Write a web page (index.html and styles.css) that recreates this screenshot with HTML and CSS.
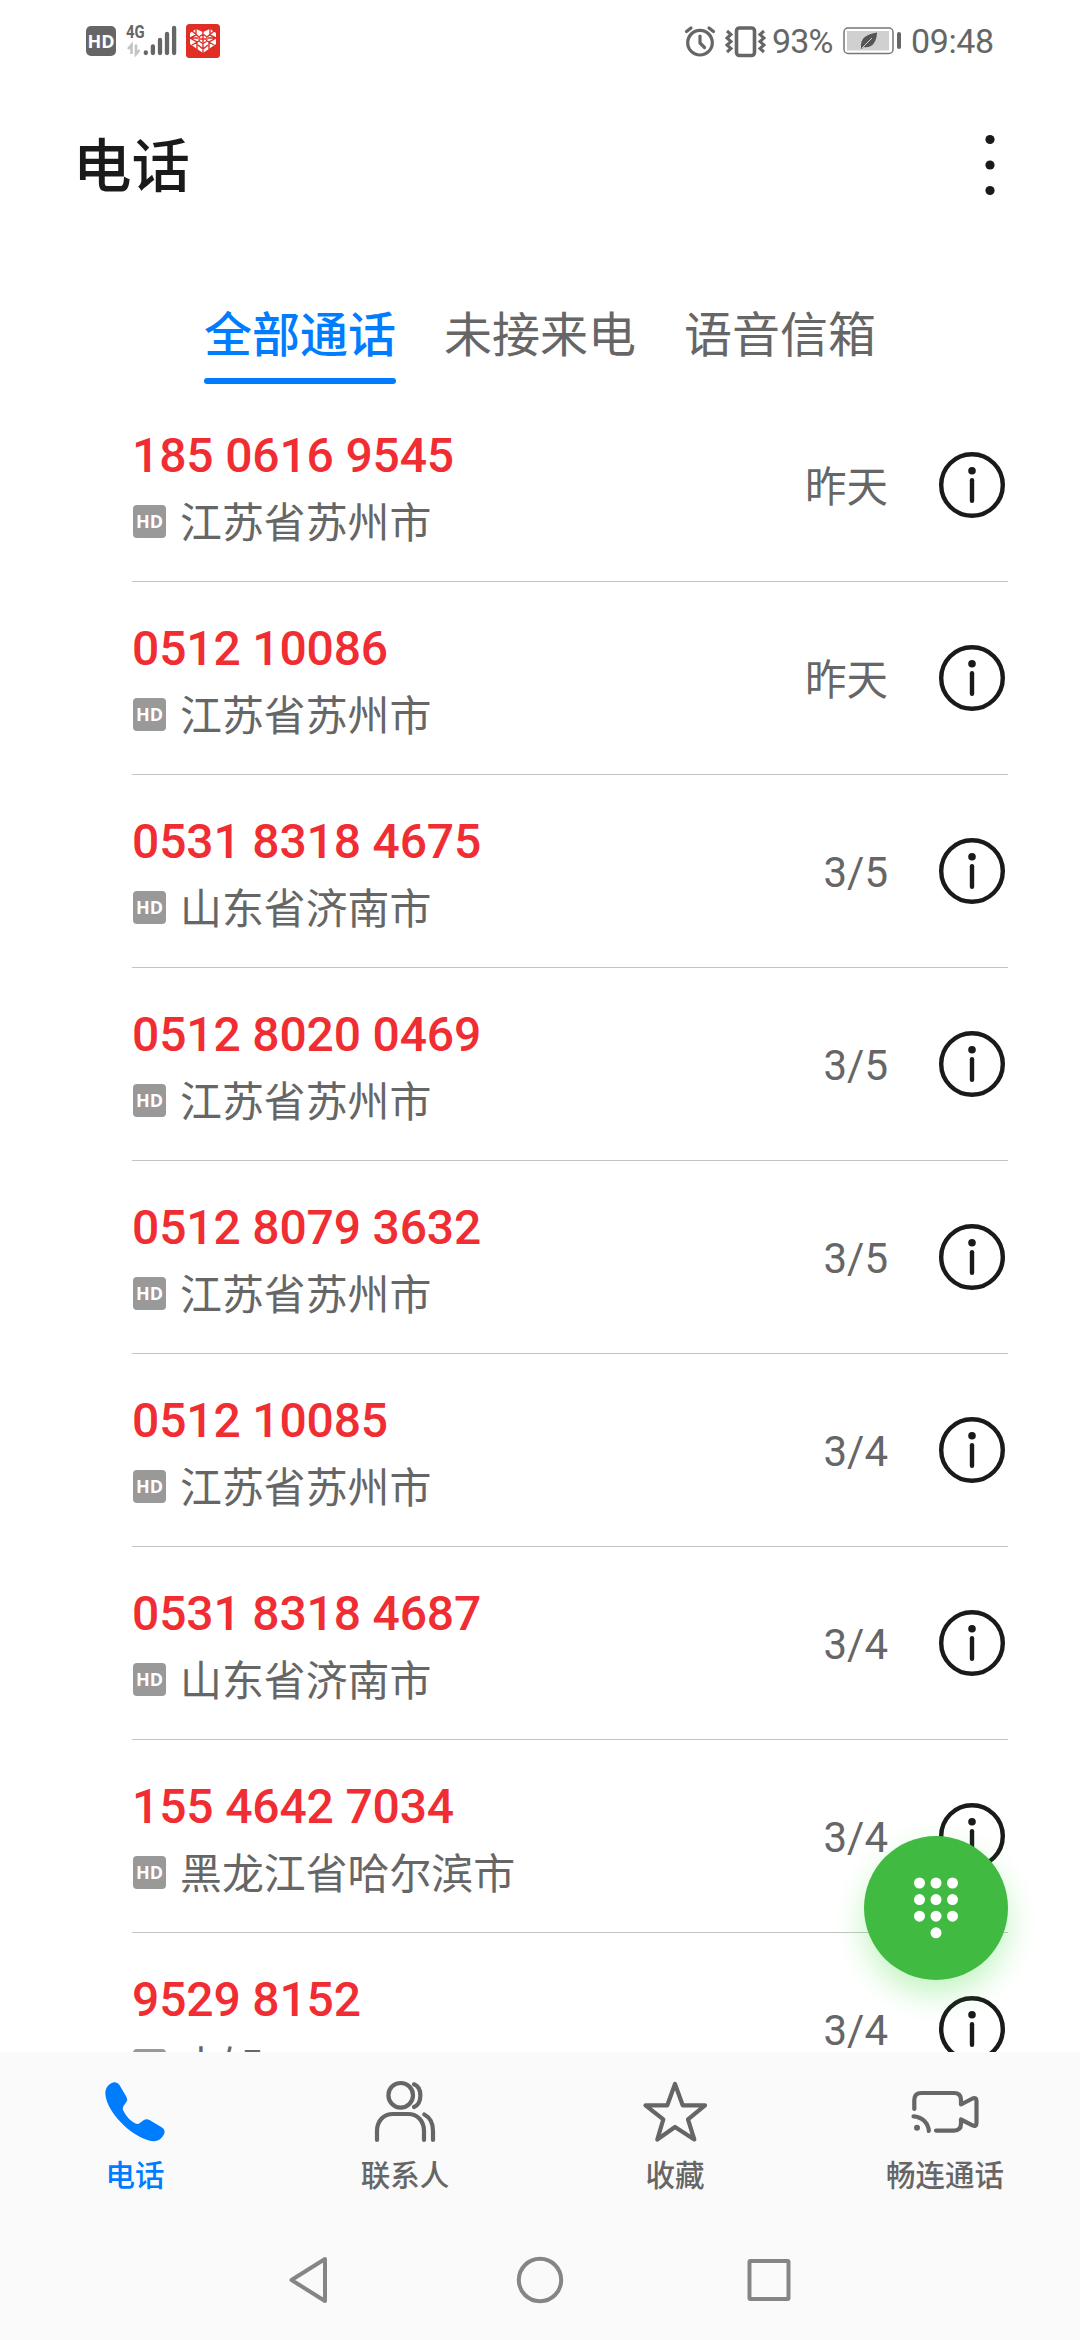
FILE: index.html
```html
<!DOCTYPE html>
<html lang="zh-CN">
<head>
  <meta charset="UTF-8">
  <title>电话</title>
  <meta name="viewport" content="width=device-width, initial-scale=1.0">
  <link rel="stylesheet" href="styles.css">
</head>
<body>
  <div class="pantalla">
    <div class="status">
      <div class="status-left">
        <span class="hd-big">HD</span>
        <div class="signal">
          <span class="net">4G</span>
          <svg width="34" height="32" viewBox="0 0 34 32">
            <path d="M2 24L5.500 20V29M10 19.500V29L13.500 25" fill="none" stroke="#c4c4c4" stroke-width="2.600"/>
            <g stroke="#666" stroke-width="4.300" stroke-linecap="round">
              <path d="M19.800 27.300v.8M26.900 21.300v6.800M34 15v13M41 9v19M48.100 3v25"/>
            </g>
          </svg>
        </div>
        <svg class="app-icon" width="34" height="34" viewBox="0 0 34 34">
          <rect width="34" height="34" rx="3.500" fill="#e02e24"/>
          <path d="M17 29L4 20V9l6-4 7 3 7-3 6 4v11z" fill="#fff"/>
          <g fill="none" stroke="#e02e24" stroke-width="1.400">
            <path d="M17 7v5M17 19v10M4 14h8M22 14h8M6 7l7 6M28 7l-7 6M6 21l7-4M28 21l-7-4M10 5v6l-6 3 7 4v7M24 5v6l6 3-7 4v7M12 21l5 4 5-4"/>
            <circle cx="17" cy="15" r="4"/>
            <path d="M14 15h6M17 12v6"/>
          </g>
        </svg>
      </div>
      <div class="status-right">
        <svg class="alarm" width="32" height="34" viewBox="0 0 32 34" fill="none" stroke="#666" stroke-width="3.200" stroke-linecap="round">
          <circle cx="16" cy="18.700" r="12.300"/>
          <path d="M16 12v7l4.500 4.500M2.500 7.500L7 4M29.500 7.500L25 4"/>
        </svg>
        <svg class="vibrate" width="42" height="34" viewBox="0 0 42 34" fill="none" stroke="#666">
          <rect x="11.500" y="4" width="18" height="27.500" rx="3" stroke-width="3.600"/>
          <path d="M2 7l4 3.500-4 3.500 4 3.500-4 3.500 4 3.500-4 3.500M39 7l-4 3.500 4 3.500-4 3.500 4 3.500-4 3.500 4 3.500" stroke-width="3"/>
        </svg>
        <span class="percent">93%</span>
        <svg class="battery" width="60" height="28" viewBox="0 0 60 28">
          <rect x="1" y="1" width="49" height="25.500" rx="4" fill="#fff" stroke="#777" stroke-width="1.500"/>
          <rect x="4" y="4" width="42" height="19.500" fill="#d0d0d0"/>
          <path d="M18 21C17 11 24 7 34 5.500C34 14 29 22 21 20L18.500 22z" fill="#555"/>
          <path d="M19 21L29 11" stroke="#d0d0d0" stroke-width="1"/>
          <path d="M56 7v13" stroke="#666" stroke-width="4" stroke-linecap="round"/>
        </svg>
        <span class="clock">09:48</span>
      </div>
    </div>

    <div class="header">
      <h1>电话</h1>
      <svg width="12" height="64" viewBox="0 0 12 64" fill="#1a1a1a">
        <circle cx="6" cy="6.500" r="4.600"/>
        <circle cx="6" cy="32" r="4.600"/>
        <circle cx="6" cy="57.500" r="4.600"/>
      </svg>
    </div>

    <div class="tabs">
      <div class="tab active">全部通话</div>
      <div class="tab">未接来电</div>
      <div class="tab">语音信箱</div>
    </div>

    <div class="lista" id="lista"></div>

    <div class="fab">
      <svg width="48" height="64" viewBox="0 0 48 64" fill="#fff">
        <circle cx="7.500" cy="7" r="5.500"/><circle cx="24" cy="7" r="5.500"/><circle cx="40.500" cy="7" r="5.500"/>
        <circle cx="7.500" cy="23.600" r="5.500"/><circle cx="24" cy="23.600" r="5.500"/><circle cx="40.500" cy="23.600" r="5.500"/>
        <circle cx="7.500" cy="40.200" r="5.500"/><circle cx="24" cy="40.200" r="5.500"/><circle cx="40.500" cy="40.200" r="5.500"/>
        <circle cx="24" cy="56.800" r="5.500"/>
      </svg>
    </div>

    <div class="menu">
      <div class="item active">
        <svg width="72" height="72" viewBox="0 0 72 72" fill="#007dff">
          <path d="M6.300 17C6.500 11 10.500 7 15 6.200Q18.500 5.700 20.500 9L27.500 21Q29 23.500 27.300 26L24.500 30Q23 32.500 24.500 35C27 40 31.500 45 36 47.300Q38.500 48.500 40.500 47.200L44.500 44.300Q47.500 42.500 50.500 44L63 51.500Q66.500 54 65.300 57.500C63.500 62 59.500 65.500 54.500 65.200C45 64.500 33.500 57.500 25 49.500C16 41 6.500 28 6.300 17Z"/>
        </svg>
        <span>电话</span>
      </div>
      <div class="item">
        <svg width="72" height="72" viewBox="0 0 72 72" class="linea">
          <circle cx="31.700" cy="19.300" r="12.300"/>
          <path d="M45 8.300C53.500 11.500 53.500 27.500 45 31"/>
          <path d="M8 64V55C8 45 14.500 38 24 38H39C48.500 38 55 45 55 55V64"/>
          <path d="M55.300 38.500C61 41.500 64 47.500 64 55V64"/>
        </svg>
        <span>联系人</span>
      </div>
      <div class="item">
        <svg width="72" height="72" viewBox="0 0 72 72" class="linea">
          <path d="M36 8L43.700 29.300H66L49 43.300L55.300 63.500L36 51L18.300 63.500L24.300 43.300L6.500 29.300H28.300Z"/>
        </svg>
        <span>收藏</span>
      </div>
      <div class="item">
        <svg width="72" height="72" viewBox="0 0 72 72" class="linea">
          <path d="M5.300 33V24Q5.300 17 12.300 17H45Q52 17 52 24V28.500L63.500 22.500Q67.500 21 67.500 25V47Q67.500 51 63.500 49.300L52 43.500V47.500Q52 54.600 45 54.600H27"/>
          <path d="M4.500 40.300C13 40.800 19.300 47 19.800 55"/>
          <circle cx="8" cy="51.700" r="3" fill="#666" stroke="none"/>
        </svg>
        <span>畅连通话</span>
      </div>
    </div>

    <div class="navbar">
      <svg width="48" height="52" viewBox="0 0 48 52"><path d="M4.500 26L38 5V47Z"/></svg>
      <svg width="48" height="52" viewBox="0 0 48 52"><circle cx="24" cy="26" r="21.200"/></svg>
      <svg width="48" height="52" viewBox="0 0 48 52"><rect x="4.500" y="7" width="39" height="38" rx="1"/></svg>
    </div>
  </div>

  <script>
    const llamadas = [
      ['185 0616 9545', '江苏省苏州市', '昨天'],
      ['0512 10086', '江苏省苏州市', '昨天'],
      ['0531 8318 4675', '山东省济南市', '3/5'],
      ['0512 8020 0469', '江苏省苏州市', '3/5'],
      ['0512 8079 3632', '江苏省苏州市', '3/5'],
      ['0512 10085', '江苏省苏州市', '3/4'],
      ['0531 8318 4687', '山东省济南市', '3/4'],
      ['155 4642 7034', '黑龙江省哈尔滨市', '3/4'],
      ['9529 8152', '未知', '3/4']
    ];

    document.getElementById('lista').innerHTML = llamadas.map(([numero, lugar, fecha]) => `
      <div class="llamada">
        <div class="datos">
          <div class="numero">${numero}</div>
          <div class="lugar"><span class="hd">HD</span><span>${lugar}</span></div>
        </div>
        <div class="fecha ${fecha === '昨天' ? 'ayer' : ''}">${fecha}</div>
        <svg class="info" width="72" height="72" viewBox="0 0 72 72">
          <circle cx="36" cy="36" r="30.800" fill="none" stroke="#1a1a1a" stroke-width="4.400"/>
          <circle cx="36" cy="21.700" r="3.800" fill="#1a1a1a"/>
          <path d="M36 31.300V51.700" stroke="#1a1a1a" stroke-width="4.400" stroke-linecap="round"/>
        </svg>
      </div>`).join('');
  </script>
</body>
</html>
```

FILE: styles.css
```css
body {
  margin: 0;
  background: #fff;
  font-family: Roboto, "Noto Sans CJK SC", sans-serif;
  color: #666;
}
svg {
  display: block;
  flex: none;
}
.pantalla {
  position: relative;
  width: 1080px;
  height: 2340px;
  display: flex;
  flex-direction: column;
  overflow: hidden;
}

/* barra de estado */
.status {
  height: 82px;
  padding: 0 87px 0 86px;
  display: flex;
  justify-content: space-between;
  align-items: center;
}
.status-left, .status-right {
  display: flex;
  align-items: center;
}
.hd-big {
  width: 30px;
  height: 30px;
  line-height: 30px;
  border-radius: 5px;
  background: #666;
  color: #fff;
  font-family: "Open Sans", sans-serif;
  font-size: 18px;
  font-weight: 700;
  text-align: center;
}
.signal {
  position: relative;
  width: 60px;
  margin-left: 10px;
}
.signal svg {
  overflow: visible;
}
.net {
  position: absolute;
  left: 0;
  top: -3px;
  font-size: 19px;
  line-height: 19px;
  font-weight: 700;
  transform: scaleX(0.78);
  transform-origin: left;
}
.status-right {
  font-size: 34px;
  line-height: 40px;
}
.vibrate {
  margin-left: 9px;
}
.percent {
  width: 61px;
  margin-left: 5px;
  letter-spacing: -0.8px;
}
.battery {
  margin-left: 10px;
}
.clock {
  width: 82px;
  margin-left: 8px;
  letter-spacing: -0.4px;
}

.header {
  height: 166px;
  padding: 0 84px 0 73px;
  display: flex;
  justify-content: space-between;
  align-items: center;
}
h1 {
  margin: 0;
  padding-bottom: 8px;
  font-size: 58.5px;
  font-weight: 500;
  color: #1a1a1a;
}

/* pestañas */
.tabs {
  height: 141px;
  display: flex;
  justify-content: center;
  gap: 48px;
}
.tab {
  height: 88px;
  margin-top: 48px;
  box-sizing: border-box;
  font-size: 48px;
  line-height: 80px;
}
.tab.active {
  color: #007dff;
  font-weight: 500;
}
.tab.active::after {
  content: "";
  display: block;
  height: 6px;
  margin-top: 2px;
  border-radius: 3px;
  background: #007dff;
}

/* lista de llamadas */
.lista {
  height: 1663px;
  padding: 0 72px 0 132px;
  overflow: hidden;
}
.llamada {
  height: 193px;
  box-sizing: border-box;
  border-bottom: 1px solid #c4c4c4;
  display: flex;
  align-items: center;
}
.datos {
  flex: 1;
  padding-top: 9px;
}
.numero {
  font-size: 48px;
  line-height: 68px;
  font-weight: 500;
  letter-spacing: -0.15px;
  color: #f02d32;
}
.lugar {
  display: flex;
  align-items: center;
  gap: 14px;
  font-size: 41.9px;
  line-height: 68px;
}
.hd {
  width: 33px;
  height: 33px;
  line-height: 33px;
  margin: 0 0 5px 1px;
  border-radius: 4px;
  background: #999;
  color: #fff;
  font-family: "Open Sans", sans-serif;
  font-size: 18px;
  font-weight: 700;
  text-align: center;
}
.fecha {
  margin-right: 48px;
  padding-top: 2px;
  font-size: 42px;
}
.fecha.ayer {
  padding: 0 0 2px;
  font-size: 41.5px;
}

/* boton de marcar */
.fab {
  position: absolute;
  right: 72px;
  top: 1836px;
  width: 144px;
  height: 144px;
  border-radius: 50%;
  background: #41ba41;
  box-shadow: 0 14px 30px rgba(65, 220, 65, 0.32);
  display: flex;
  justify-content: center;
  align-items: center;
}

/* menu inferior */
.menu {
  position: relative;
  height: 168px;
  background: #fafafa;
  display: grid;
  grid-template-columns: repeat(4, 1fr);
}
.item {
  padding-top: 24px;
  display: flex;
  flex-direction: column;
  align-items: center;
  font-size: 29.5px;
  line-height: 57px;
  font-weight: 500;
}
.item.active {
  color: #007dff;
}
.linea {
  fill: none;
  stroke: #666;
  stroke-width: 4.2;
  stroke-linecap: round;
  stroke-linejoin: round;
}
.navbar {
  height: 120px;
  background: #fafafa;
  display: flex;
  justify-content: center;
  align-items: center;
  gap: 181px;
}
.navbar svg {
  fill: none;
  stroke: #858585;
  stroke-width: 4;
  stroke-linejoin: round;
}
```
